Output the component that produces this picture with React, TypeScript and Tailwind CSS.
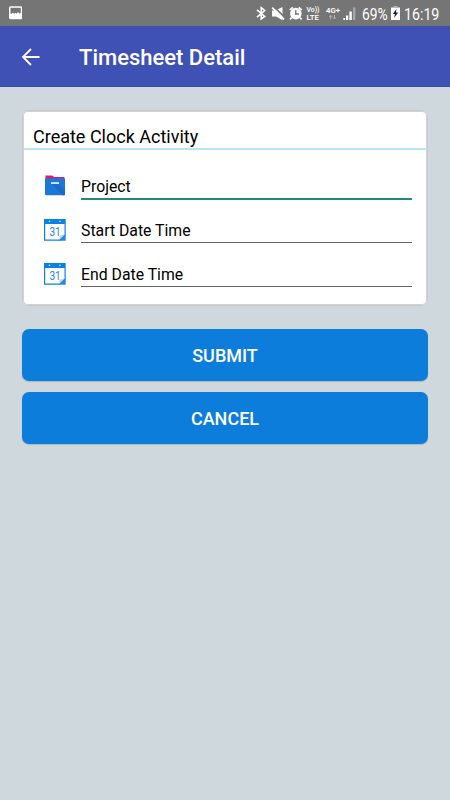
import React from "react";

const StatusIcons = () => (
  <svg width="108" height="26" viewBox="250 0 108 26" fill="none">
    {/* bluetooth */}
    <path d="M257 9.8L264.7 16.5L261.2 19V7.6L264.7 10.5L257 17.2" stroke="#fff" strokeWidth="1.6" />
    {/* muted speaker */}
    <path d="M272 10.5H275.5L282.5 7V20.2L276 16.5H272Z" fill="#fff" />
    <path d="M273.6 6.4L285.4 18.2" stroke="#757575" strokeWidth="1.8" />
    <path d="M272.2 7.6L284 19.4" stroke="#fff" strokeWidth="1.8" />
    {/* alarm */}
    <circle cx="295.8" cy="13.6" r="5.8" fill="#fff" />
    <path d="M289.8 10L292.8 7.3M301.8 10L298.8 7.3M291.6 17.5L290 19.6M300 17.5L301.6 19.6" stroke="#fff" strokeWidth="1.6" />
    <path d="M295.7 10.3V14H299" stroke="#757575" strokeWidth="1.5" />
    {/* network labels */}
    <text x="306.5" y="11.8" fontSize="7" fontWeight="600" fill="#fff" textLength="13" lengthAdjust="spacingAndGlyphs">Vo))</text>
    <text x="306.5" y="20" fontSize="8" fontWeight="600" fill="#fff" textLength="12.5" lengthAdjust="spacingAndGlyphs">LTE</text>
    <text x="326" y="13" fontSize="8" fontWeight="600" fill="#fff" textLength="14" lengthAdjust="spacingAndGlyphs">4G+</text>
    <path d="M330.7 19.5V15.5M329.2 17L330.7 15.3L332.2 17M334.5 15V18.5M333 17.3L334.5 19L336 17.3" stroke="#b0b0b0" strokeWidth="1" />
    {/* signal bars */}
    <path d="M343.3 18H345V20H343.3ZM346 15.5H348.2V20H346ZM349.4 11.5H351.8V20H349.4Z" fill="#fff" />
    <path d="M353 7.5H355.4V20H353Z" fill="#a5a5a5" />
  </svg>
);

const StatusBar = () => (
  <div className="flex h-[26px] items-center bg-[#757575] text-white">
    <svg className="ml-[9px]" width="13" height="14" viewBox="0 0 13 14">
      <rect x="0.75" y="1" width="11.8" height="11.6" rx="1" fill="none" stroke="#fff" strokeWidth="1.5" />
      <path d="M1 9V7.2L2.5 8L4 6.6L5 8L6.4 6.8L7.6 7.8L9 6L10.3 7.6L12 7V12H1Z" fill="#fff" />
    </svg>
    <div className="ml-[228px] flex h-full items-center">
      <StatusIcons />
      <span className="ml-[4px] w-[29px] origin-left scale-x-[0.84] pt-[3px] text-[16.5px] leading-5">
        69%
      </span>
      <svg width="9" height="14" viewBox="0 0 9 14">
        <path d="M0 1.5H9V14H0Z" fill="#fff" />
        <path d="M2.5 0H6.5V1.5H2.5Z" fill="#b5b5b5" />
        <path d="M5.6 2.8L1.8 8H4L3.1 12L7.2 6.4H4.9Z" fill="#222" />
      </svg>
      <span className="ml-[4px] w-[40px] origin-left scale-x-[0.86] pt-[3px] text-[16.5px] leading-5">
        16:19
      </span>
    </div>
  </div>
);

const FolderIcon = () => (
  <svg width="22" height="22" viewBox="0 0 22 22">
    <path d="M1.5 0.4H8.2L10 2H20.3V5H1.5Z" fill="#e3175f" />
    <path d="M1 3.2H21V19.3Q21 20.3 20 20.3H2Q1 20.3 1 19.3Z" fill="#1c78d8" />
    <path d="M7.5 9H15L21 15V19.3Q21 20.3 20 20.3H18.6Z" fill="#1a6cc8" />
    <rect x="7" y="7.3" width="8" height="1.5" fill="#fff" />
  </svg>
);

const CalendarIcon = () => (
  <svg width="22" height="22" viewBox="0 0 22 22">
    <path d="M0 0H21.7V16L16 21.8H0Z" fill="#0c80e4" />
    <path d="M1.2 5H20.5V15.4L15.5 20.6H1.2Z" fill="#fff" />
    <path d="M15.5 16.8L20.5 15.4L15.5 20.6Z" fill="#cdd0d2" />
    <path d="M21.7 15V21.8H15Z" fill="#2389e0" />
    <path d="M4.8 2.4H6.2M15.3 2.4H16.7" stroke="#d5eafc" strokeWidth="1.2" />
    <text x="5.4" y="17" fontSize="12" fill="#2e86dc" textLength="11.4" lengthAdjust="spacingAndGlyphs">31</text>
  </svg>
);

const Field = ({
  icon,
  label,
  active = false,
}: {
  icon: React.ReactNode;
  label: string;
  active?: boolean;
}) => (
  <div className="flex h-[44px] items-start pl-[21px] pr-[15px]">
    <div className="mt-[9px] w-[22px]">{icon}</div>
    <div
      className={
        active
          ? "ml-[15px] h-[34px] flex-1 border-b-2 border-[#20897c] pt-[11px] text-[15.8px] leading-5"
          : "ml-[15px] h-[33px] flex-1 border-b border-[#666] pt-[11px] text-[15.8px] leading-5"
      }
    >
      {label}
    </div>
  </div>
);

const Button = ({ label }: { label: string }) => (
  <button className="h-[52px] w-full rounded-[7px] bg-[#0c7ddb] text-[18px] font-medium text-white shadow-[0_1px_1px_rgba(0,0,0,0.15)]">
    {label}
  </button>
);

const App = () => {
  return (
    <div className="h-[800px] w-[450px] overflow-hidden bg-[#cfd8dd] font-[Roboto,sans-serif] text-black">
      <StatusBar />
      <header className="flex h-[61px] items-center border-b border-[#3949a9] bg-[#3f51b5] text-white">
        <svg className="ml-[21px] mt-px" width="20" height="20" viewBox="0 0 20 20" fill="none">
          <path d="M10 2L2 10L10 18M2 10H18.5" stroke="#fff" strokeWidth="1.8" />
        </svg>
        <h1 className="ml-[38px] mt-[3px] text-[22px] font-medium">Timesheet Detail</h1>
      </header>
      <main className="px-[22px] pt-[23px]">
        <section className="h-[196px] rounded-[6px] border border-[#c8cacb] bg-white shadow-[inset_0_0_0_1px_#d2d2d2]">
          <h2 className="h-[39px] border-b-2 border-[#b9e4f6] pl-[10px] pt-[14px] text-[18px] leading-6">
            Create Clock Activity
          </h2>
          <div className="pt-[16px]">
            <Field icon={<FolderIcon />} label="Project" active />
            <Field icon={<CalendarIcon />} label="Start Date Time" />
            <Field icon={<CalendarIcon />} label="End Date Time" />
          </div>
        </section>
        <div className="mt-[23px] flex flex-col gap-[11px]">
          <Button label="SUBMIT" />
          <Button label="CANCEL" />
        </div>
      </main>
    </div>
  );
};

export default App;
